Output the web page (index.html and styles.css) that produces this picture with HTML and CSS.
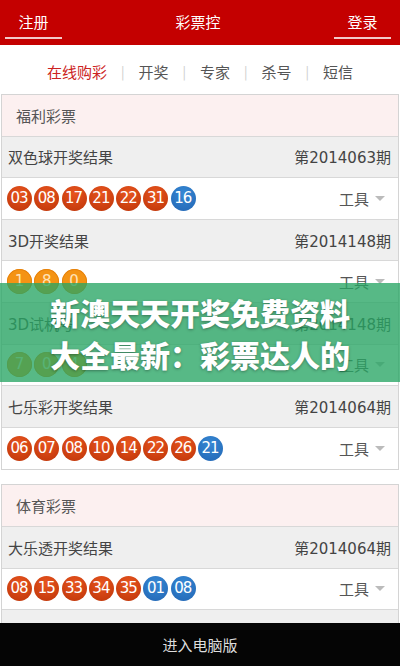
FILE: index.html
```html
<!DOCTYPE html>
<html>
<head>
  <meta charset="UTF-8">
  <meta name="viewport" content="width=device-width, initial-scale=1.0">
  <title>彩票控</title>
  <link rel="stylesheet" href="styles.css">
</head>
<body>
  <div class="topbar">
    <a href="#" class="top-link">注册</a>
    <span class="top-title">彩票控</span>
    <a href="#" class="top-link">登录</a>
  </div>

  <div class="nav">
    <a href="#" class="nav-item active">在线购彩</a>
    <span class="nav-sep">|</span>
    <a href="#" class="nav-item">开奖</a>
    <span class="nav-sep">|</span>
    <a href="#" class="nav-item">专家</a>
    <span class="nav-sep">|</span>
    <a href="#" class="nav-item">杀号</a>
    <span class="nav-sep">|</span>
    <a href="#" class="nav-item">短信</a>
  </div>

  <div class="card">
    <div class="card-title">福利彩票</div>

    <div class="row-head"><span>双色球开奖结果</span><span>第2014063期</span></div>
    <div class="row-balls">
      <div class="balls">
        <span class="ball red">03</span><span class="ball red">08</span><span class="ball red">17</span><span class="ball red">21</span><span class="ball red">22</span><span class="ball red">31</span><span class="ball blue">16</span>
      </div>
      <span class="tools">工具<i class="caret"></i></span>
    </div>

    <div class="row-head"><span>3D开奖结果</span><span>第2014148期</span></div>
    <div class="row-balls">
      <div class="balls">
        <span class="ball orange">1</span><span class="ball orange">8</span><span class="ball orange">0</span>
      </div>
      <span class="tools">工具<i class="caret"></i></span>
    </div>

    <div class="row-head"><span>3D试机号</span><span>第2014148期</span></div>
    <div class="row-balls">
      <div class="balls">
        <span class="ball orange">7</span><span class="ball orange">0</span><span class="ball orange">4</span>
      </div>
      <span class="tools">工具<i class="caret"></i></span>
    </div>

    <div class="row-head"><span>七乐彩开奖结果</span><span>第2014064期</span></div>
    <div class="row-balls last">
      <div class="balls">
        <span class="ball red">06</span><span class="ball red">07</span><span class="ball red">08</span><span class="ball red">10</span><span class="ball red">14</span><span class="ball red">22</span><span class="ball red">26</span><span class="ball blue">21</span>
      </div>
      <span class="tools">工具<i class="caret"></i></span>
    </div>
  </div>

  <div class="card">
    <div class="card-title">体育彩票</div>

    <div class="row-head"><span>大乐透开奖结果</span><span>第2014064期</span></div>
    <div class="row-balls">
      <div class="balls">
        <span class="ball red">08</span><span class="ball red">15</span><span class="ball red">33</span><span class="ball red">34</span><span class="ball red">35</span><span class="ball blue">01</span><span class="ball blue">08</span>
      </div>
      <span class="tools">工具<i class="caret"></i></span>
    </div>

    <div class="row-head"><span>排列三开奖结果</span><span>第2014148期</span></div>
    <div class="row-balls last">
      <div class="balls">
        <span class="ball orange">3</span><span class="ball orange">5</span><span class="ball orange">9</span>
      </div>
      <span class="tools">工具<i class="caret"></i></span>
    </div>
  </div>

  <div class="banner">新澳天天开奖免费资料<br>大全最新：彩票达人的</div>

  <a href="#" class="pc-bar">进入电脑版</a>
</body>
</html>
```

FILE: styles.css
```css
body {
  margin: 0;
  font-family: "Noto Sans CJK SC", "Noto Sans", sans-serif;
  background-color: #fff;
  padding-bottom: 60px;
}

a {
  text-decoration: none;
}

.topbar {
  height: 45px;
  background-color: #c40000;
  display: flex;
  align-items: flex-start;
  justify-content: space-between;
  padding: 0 9px 0 5px;
  box-sizing: border-box;
}

.top-link {
  width: 57px;
  height: 39px;
  line-height: 44px;
  text-align: center;
  color: #fff;
  font-size: 15px;
  border-bottom: 2px solid #f2c9c9;
  box-sizing: border-box;
}

.top-title {
  color: #fff;
  font-size: 15px;
  line-height: 44px;
}

.nav {
  height: 49px;
  padding-top: 3px;
  box-sizing: border-box;
  display: flex;
  align-items: center;
  justify-content: center;
  font-size: 15px;
}

.nav-item {
  color: #555;
}

.nav-item.active {
  color: #c22;
}

.nav-sep {
  color: #ccc;
  font-size: 13px;
  margin: 0 14px;
}

.card {
  border: 1px solid #d4d4d4;
  margin: 0 1px 14px;
}

.card-title,
.row-head,
.row-balls {
  height: 41.6px;
  box-sizing: border-box;
  border-bottom: 1px solid #d8d8d8;
  display: flex;
  align-items: center;
  font-size: 15px;
}

.card-title {
  background-color: #fcf0f0;
  color: #555;
  padding-left: 14px;
}

.row-head {
  background-color: #efefef;
  color: #444;
  font-family: "DejaVu Sans", "Noto Sans CJK SC", sans-serif;
  justify-content: space-between;
  padding: 0 7px 0 6px;
}

.row-balls {
  justify-content: space-between;
  padding: 0 13px 0 5px;
}

.row-balls.last {
  border-bottom: none;
}

.balls {
  display: flex;
  gap: 2.3px;
}

.ball {
  width: 25px;
  height: 25px;
  border-radius: 50%;
  color: #fff;
  font-family: "DejaVu Sans", sans-serif;
  font-size: 15px;
  line-height: 25px;
  text-align: center;
  letter-spacing: -1px;
  text-indent: -1px;
}

.ball.red {
  background: radial-gradient(circle at 50% 30%, #e8551f, #bd3408);
}

.ball.blue {
  background: radial-gradient(circle at 50% 30%, #3688d4, #2266b4);
}

.ball.orange {
  background-color: #f49314;
  color: #ffe3b8;
  letter-spacing: 0;
  text-indent: 0;
  box-shadow: inset 0 0 0 1px #e6820c;
}

.tools {
  color: #555;
  font-size: 15px;
  display: flex;
  align-items: center;
}

.caret {
  width: 0;
  height: 0;
  border-left: 5px solid transparent;
  border-right: 5px solid transparent;
  border-top: 5px solid #bbb;
  margin-left: 6px;
}

.banner {
  position: absolute;
  top: 283px;
  left: 0;
  width: 100%;
  height: 99px;
  box-sizing: border-box;
  padding-top: 8px;
  background-color: rgba(40, 165, 100, 0.78);
  color: #fff;
  font-size: 30px;
  font-weight: 900;
  line-height: 42px;
  text-align: center;
  text-shadow: 0 1px 3px rgba(0, 0, 0, 0.35);
}

.pc-bar {
  position: fixed;
  left: 0;
  bottom: 0;
  width: 100%;
  height: 43px;
  line-height: 43px;
  background-color: #050505;
  color: #ddd;
  text-align: center;
  font-size: 15px;
}
```
